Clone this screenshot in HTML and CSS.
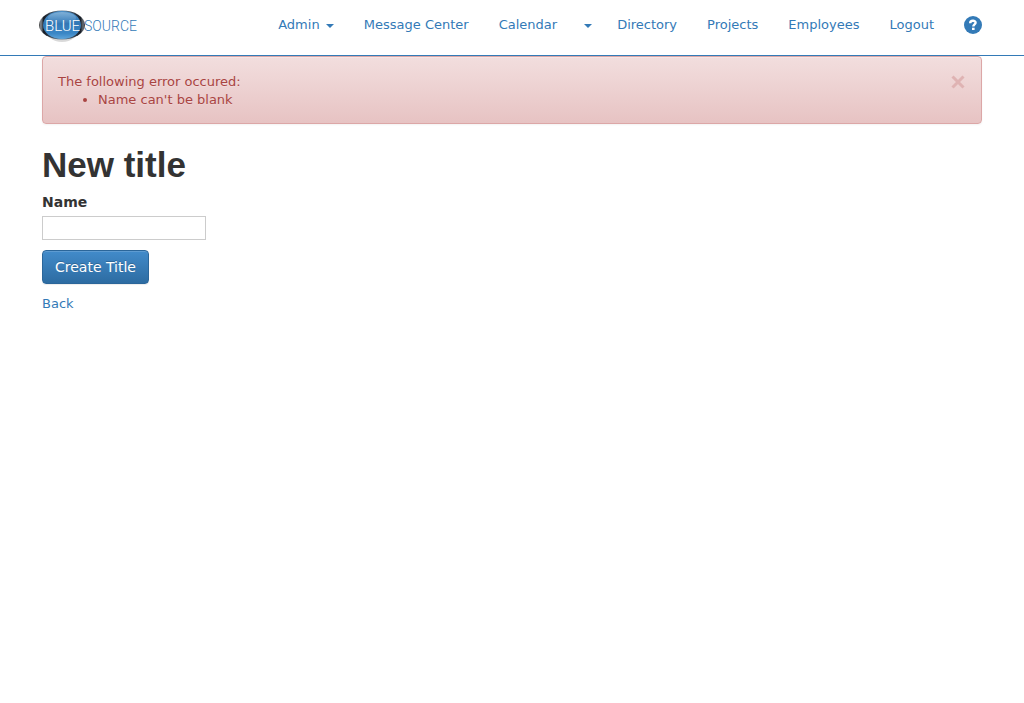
FILE: index.html
```html
<!DOCTYPE html>
<html lang="en">
<head>
<meta charset="utf-8">
<title>New title</title>
<link rel="stylesheet" href="styles.css">
</head>
<body>
<header class="site-header">
  <div class="container header-row">
    <a class="brand" href="#" aria-label="Blue Source">
      <svg width="100" height="36" viewBox="0 0 100 36" aria-hidden="true">
        <defs>
          <linearGradient id="rim" x1="0" y1="0" x2="1" y2="0">
            <stop offset="0" stop-color="#333"/>
            <stop offset=".04" stop-color="#8b9096"/>
            <stop offset=".1" stop-color="#151b24"/>
            <stop offset=".5" stop-color="#6d8195"/>
            <stop offset=".9" stop-color="#151b24"/>
            <stop offset=".96" stop-color="#6b7178"/>
            <stop offset="1" stop-color="#222"/>
          </linearGradient>
          <linearGradient id="face" x1="0" y1="0" x2="0" y2="1">
            <stop offset="0" stop-color="#4a8fc8"/>
            <stop offset=".45" stop-color="#3278b6"/>
            <stop offset=".8" stop-color="#3b87c6"/>
            <stop offset="1" stop-color="#5fa5da"/>
          </linearGradient>
          <linearGradient id="gloss" x1="0" y1="0" x2="0" y2="1">
            <stop offset="0" stop-color="#fff" stop-opacity=".3"/>
            <stop offset="1" stop-color="#fff" stop-opacity="0"/>
          </linearGradient>
        </defs>
        <ellipse cx="23" cy="21" rx="17" ry="14" fill="#000" opacity=".15"/>
        <ellipse cx="23" cy="18" rx="23" ry="14.5" fill="url(#rim)"/>
        <ellipse cx="23" cy="18" rx="19" ry="14" fill="url(#face)"/>
        <ellipse cx="23" cy="11" rx="14" ry="6" fill="url(#gloss)"/>
        <text class="logo-blue" x="6" y="24">BLUE</text>
        <text class="logo-source" x="45" y="24">SOURCE</text>
      </svg>
    </a>
    <nav class="nav" aria-label="Main">
      <a class="nav-link" href="#">Admin <span class="caret"></span></a>
      <a class="nav-link" href="#">Message Center</a>
      <a class="nav-link" href="#">Calendar</a>
      <button class="nav-toggle" type="button" aria-label="Calendar menu"><span class="caret"></span></button>
      <a class="nav-link" href="#">Directory</a>
      <a class="nav-link" href="#">Projects</a>
      <a class="nav-link" href="#">Employees</a>
      <a class="nav-link" href="#">Logout</a>
      <a class="nav-help" href="#" aria-label="Help">
        <svg width="18" height="18" viewBox="0 0 18 18" aria-hidden="true">
          <circle cx="9" cy="9" r="9" fill="#337ab7"/>
          <path d="M6.2 7.2C6.2 4.2 11.6 4 11.6 6.7C11.6 8.4 9.3 8.4 9.3 10.5" fill="none" stroke="#fff" stroke-width="2.4"/>
          <path d="M8 11.7h2.6v2.3H8z" fill="#fff"/>
        </svg>
      </a>
    </nav>
  </div>
</header>
<main class="container">
  <div class="alert" role="alert">
    <div>
      The following error occured:
      <ul class="alert-list"><li>Name can't be blank</li></ul>
    </div>
    <button class="alert-close" type="button" aria-label="Close">
      <svg width="14" height="14" viewBox="0 0 14 14" aria-hidden="true"><path d="M1.5 1.5l11 11M12.5 1.5l-11 11" stroke="currentColor" stroke-width="3"/></svg>
    </button>
  </div>
  <h1 class="title">New title</h1>
  <form class="form">
    <label class="label" for="name">Name</label>
    <input class="field" id="name" type="text">
    <button class="submit" type="button">Create Title</button>
  </form>
  <a class="back" href="#">Back</a>
</main>
</body>
</html>
```
FILE: styles.css
```css
* { box-sizing: border-box; }

body {
  margin: 0;
  background: #fff;
  color: #333;
  font: 13px/18px Verdana, "DejaVu Sans", sans-serif;
}

a { color: #337ab7; text-decoration: none; }

.container {
  max-width: 1024px;
  margin: 0 auto;
  padding: 0 42px;
}

.site-header { border-bottom: 1px solid #337ab7; }

.header-row {
  display: flex;
  justify-content: space-between;
  align-items: center;
  height: 55px;
  padding-left: 39px;
  padding-bottom: 5px;
}

.brand svg { display: block; overflow: visible; }

.logo-blue,
.logo-source {
  font-family: Roboto, sans-serif;
  font-weight: 300;
}
.logo-blue { fill: #fff; font-size: 15px; }
.logo-source { fill: #337ab7; font-size: 14px; }

.nav { display: flex; align-items: center; }
.nav-link { padding: 0 15px; white-space: nowrap; }

.nav-toggle {
  padding: 0 10px 0 12px;
  border: 0;
  background: none;
  color: #337ab7;
  font: inherit;
}

.nav-help { padding-left: 15px; }
.nav-help svg { display: block; }

.caret {
  display: inline-block;
  margin-left: 2px;
  border: 4px solid transparent;
  border-top-color: currentColor;
  border-bottom: 0;
  vertical-align: middle;
}
.nav-toggle .caret { margin-left: 0; }

.alert {
  display: flex;
  justify-content: space-between;
  align-items: flex-start;
  margin-bottom: 20px;
  padding: 16px 16px 14px 15px;
  border: 1px solid #dca7a7;
  border-radius: 4px;
  background: linear-gradient(#f2dede, #e7c3c3);
  box-shadow: inset 0 1px 0 rgba(255, 255, 255, .25), 0 1px 2px rgba(0, 0, 0, .05);
  color: #a94442;
  text-shadow: 0 1px 0 rgba(255, 255, 255, .2);
}

.alert-list { margin: 0; padding-left: 40px; }

.alert-close {
  padding: 2px 0 0;
  border: 0;
  background: none;
  color: #dfb3b3;
}
.alert-close svg { display: block; }

.title {
  margin: 0 0 6px;
  color: #333;
  font: bold 35px/42px "Helvetica Neue", "Liberation Sans", sans-serif;
}

.form {
  display: flex;
  flex-direction: column;
  align-items: flex-start;
}

.label {
  margin-bottom: 4px;
  font-size: 14px;
  font-weight: bold;
  line-height: 20px;
}

.field {
  width: 164px;
  height: 24px;
  margin-bottom: 10px;
  padding: 2px 4px;
  border: 1px solid #ccc;
  background: #fff;
  font: inherit;
}

.submit {
  margin-bottom: 11px;
  padding: 6px 12px;
  border: 1px solid #2b669a;
  border-radius: 4px;
  background: linear-gradient(#428bca, #2d6ca2);
  box-shadow: inset 0 1px 0 rgba(255, 255, 255, .15), 0 1px 1px rgba(0, 0, 0, .075);
  color: #fff;
  font: 14px/20px Verdana, "DejaVu Sans", sans-serif;
  text-shadow: 0 -1px 0 rgba(0, 0, 0, .2);
}
```
